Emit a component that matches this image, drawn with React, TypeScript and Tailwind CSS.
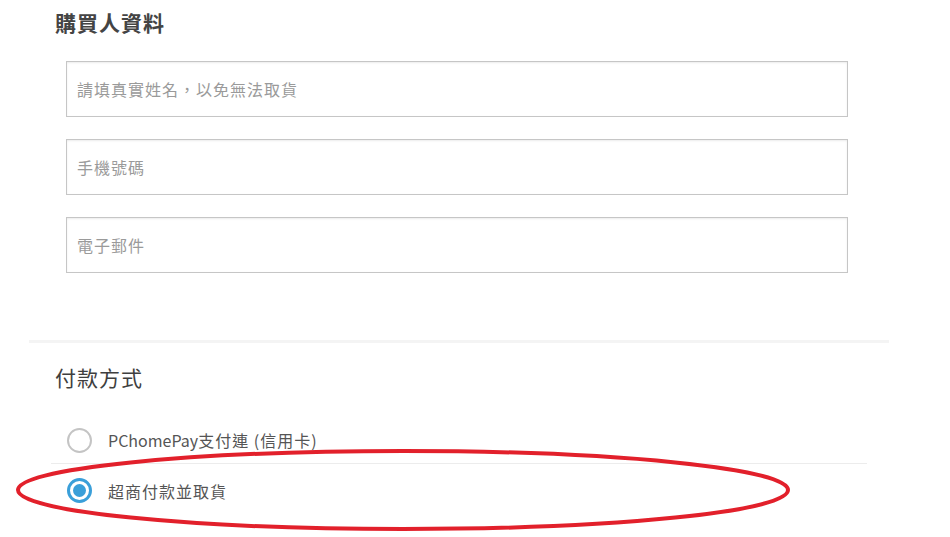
import { useState } from 'react';

const font = { fontFamily: '"Noto Sans CJK TC", "Noto Sans", sans-serif' };

const fields = ['請填真實姓名，以免無法取貨', '手機號碼', '電子郵件'];

const payments = [
    { id: 'pchome', latin: 'PChomePay', label: '支付連 (信用卡)' },
    { id: 'store', latin: '', label: '超商付款並取貨' },
];

function Radio({ checked }: { checked: boolean }) {
    if (checked) {
        return (
            <span className="flex h-[25px] w-[25px] items-center justify-center rounded-full border-[3px] border-[#3a9fd9] bg-white">
                <span className="h-[13px] w-[13px] rounded-full bg-[#3a9fd9]" />
            </span>
        );
    }
    return <span className="block h-[25px] w-[25px] rounded-full border-2 border-[#c4c4c4] bg-white" />;
}

export default function App() {
    const [payment, setPayment] = useState('store');

    return (
        <div className="relative h-[537px] w-[950px] overflow-hidden bg-white" style={font}>
            {/* Buyer info */}
            <div className="flex h-[46px] items-center pl-[55px]">
                <h2 className="text-[21px] font-bold tracking-[1px] text-[#444]">購買人資料</h2>
            </div>
            <div className="mt-[15px] flex flex-col gap-[22px] pl-[66px]">
                {fields.map((f) => (
                    <input
                        key={f}
                        placeholder={f}
                        className="h-[56px] w-[782px] border border-[#c6c6c6] bg-white pl-[10px] text-[16px] tracking-[1px] text-[#555] shadow-[inset_0_1px_2px_rgba(0,0,0,0.08)] outline-none placeholder:text-[#9a9a9a]"
                    />
                ))}
            </div>

            <div className="ml-[29px] mt-[67px] h-[3px] w-[860px] bg-[#f4f4f4]" />

            {/* Payment */}
            <div className="mt-[20px] flex h-[30px] items-center pl-[55px]">
                <h2 className="text-[21px] tracking-[1px] text-[#3f3f3f]">付款方式</h2>
            </div>
            <div className="ml-[51px] mt-[24px] w-[816px]">
                {payments.map((p, i) => (
                    <div key={p.id}>
                        {i > 0 && <div className="h-px bg-[#ececec]" />}
                        <label
                            className={`flex cursor-pointer items-center gap-4 pl-4 ${i === 0 ? 'h-[46px]' : 'h-[53px]'}`}
                            onClick={() => setPayment(p.id)}
                        >
                            <Radio checked={payment === p.id} />
                            <span className="text-[16px] tracking-[1px] text-[#555]">
                                {p.latin && <span className="tracking-[0px]">{p.latin}</span>}
                                {p.label}
                            </span>
                        </label>
                    </div>
                ))}
            </div>

            {/* annotation */}
            <svg className="pointer-events-none absolute left-0 top-0" width="950" height="537">
                <ellipse cx="403" cy="490" rx="385" ry="39" fill="none" stroke="#e2202b" strokeWidth="4" />
            </svg>
        </div>
    );
}
